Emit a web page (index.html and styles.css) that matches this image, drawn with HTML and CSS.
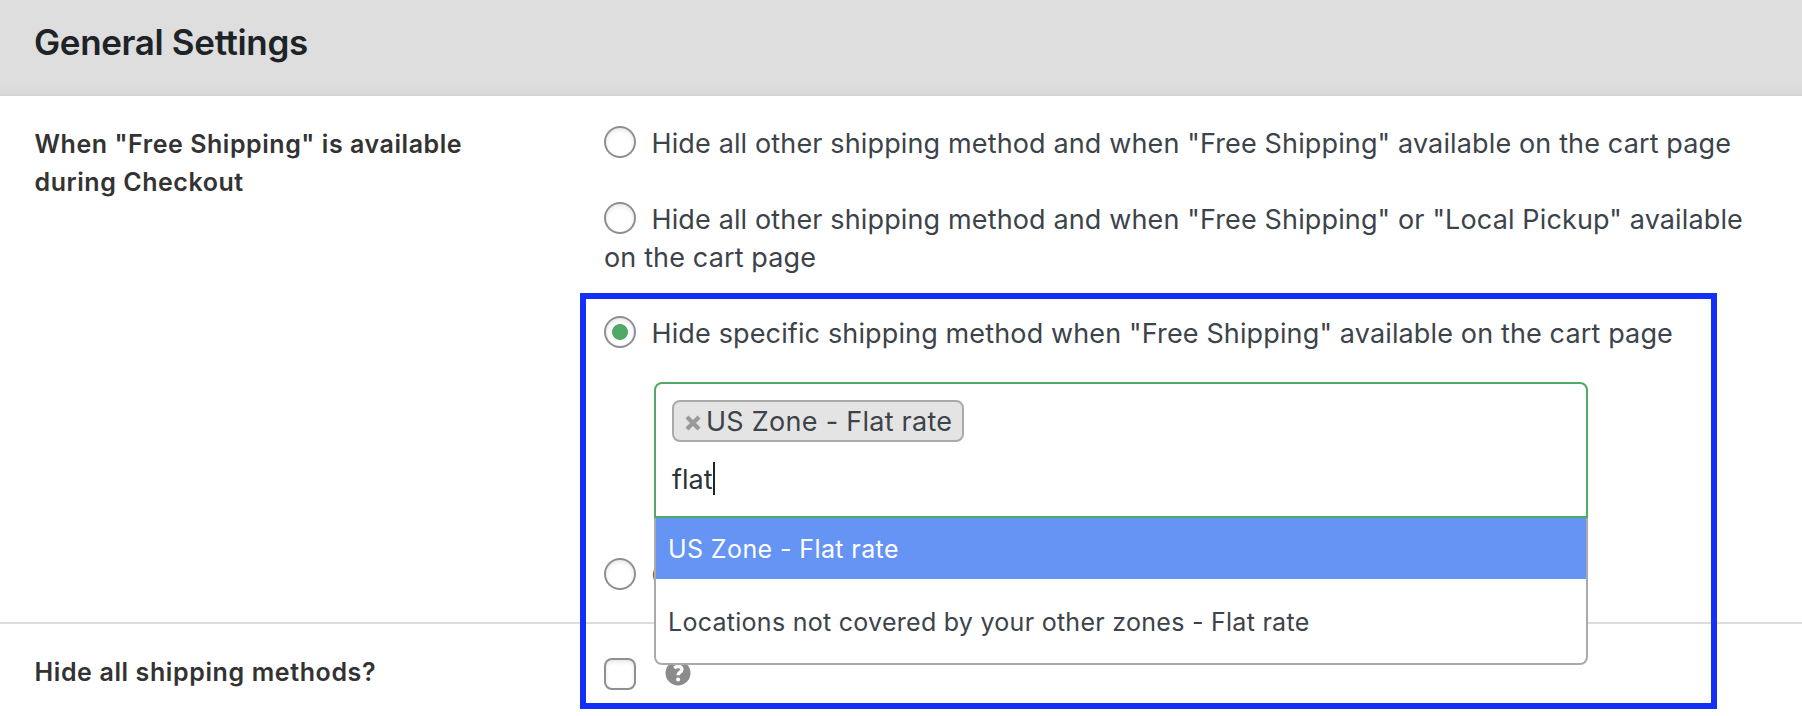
FILE: index.html
```
<!DOCTYPE html>
<html lang="en">
<head>
<meta charset="utf-8">
<title>General Settings</title>
<link rel="stylesheet" href="styles.css">
</head>
<body>
<main class="settings">
  <header class="settings-header"><h2 class="title">General Settings</h2></header>
  <section class="row row-methods">
    <div class="row-label">When "Free Shipping" is available<br>during Checkout</div>
    <div class="row-field">
      <label class="option"><span class="radio"></span>Hide all other shipping method and when "Free Shipping" available on the cart page</label>
      <label class="option"><span class="radio"></span>Hide all other shipping method and when "Free Shipping" or "Local Pickup" available<br>on the cart page</label>
      <label class="option"><span class="radio radio-checked"></span>Hide specific shipping method when "Free Shipping" available on the cart page</label>
      <div class="select">
        <div class="chip">
          <svg class="chip-remove" width="16" height="16" viewBox="0 0 16 16"><path d="M2 2L14 14M14 2L2 14" stroke="#999" stroke-width="4.2"/></svg><span class="chip-text">US Zone - Flat rate</span>
        </div>
        <div class="search"><span>flat</span><i class="caret"></i></div>
        <ul class="dropdown">
          <li class="choice choice-active">US Zone - Flat rate</li>
          <li class="choice choice-long">Locations not covered by your other zones - Flat rate</li>
        </ul>
      </div>
      <label class="option"><span class="radio"></span>C</label>
    </div>
  </section>
  <section class="row row-hide">
    <div class="row-label label-hide">Hide all shipping methods?</div>
    <div class="row-field field-hide">
      <span class="checkbox"></span>
      <svg class="help" width="26" height="26" viewBox="0 0 26 26"><circle cx="13" cy="13" r="12.5" fill="#8c8c8c"/><path d="M9.2 7.9C10.2 7 11.6 6.5 13.2 6.5C15.6 6.5 16.9 7.7 16.9 9.4C16.9 12.2 13.1 12.2 13.1 15.3" fill="none" stroke="#fff" stroke-width="3.4"/><circle cx="13.1" cy="19.4" r="2" fill="#fff"/></svg>
    </div>
  </section>
  <div class="highlight"></div>
</main>
</body>
</html>
```
FILE: styles.css
```
* { box-sizing: border-box; }
body { margin: 0; background: #fff; font-family: Inter, "Liberation Sans", sans-serif; color: #3c434a; }
.settings { position: relative; height: 716px; overflow: hidden; }
.settings-header { height: 96px; padding: 21px 34px 0; background: linear-gradient(#dedede 84px, #d9d9d9 93px, #d2d2d2 96px); }
.title { margin: 0; font-size: 35px; line-height: 42px; font-weight: 600; letter-spacing: -.35px; color: #1d2327; }
.row { display: flex; }
.row-methods { height: 528px; border-bottom: 2px solid #dcdcdc; }
.row-label { width: 604px; flex: none; padding: 29px 0 0 34.5px; font-size: 25px; line-height: 38px; font-weight: 600; letter-spacing: .55px; color: #333; }
.label-hide { letter-spacing: .61px; }
.row-field { flex: 1; padding-top: 29px; display: flex; flex-direction: column; }
.option { display: block; flex: none; margin-bottom: 38px; font-size: 27px; line-height: 38px; letter-spacing: .135px; white-space: nowrap; }
.radio, .checkbox { display: inline-block; width: 32px; height: 32px; border: 2px solid #8c8f94; background: #fff; box-shadow: inset 0 2px 4px rgba(0, 0, 0, .1); }
.radio { margin: 1px 15.5px 0 0; vertical-align: top; border-radius: 50%; }
.radio-checked { background: radial-gradient(circle, #52a966 7.6px, transparent 8.3px); }
.select { position: relative; flex: none; width: 934px; height: 136px; margin: -9px 0 39px 50px; padding: 16px; border: 2px solid #52a966; border-radius: 8px 8px 0 0; background: #fff; }
.chip { display: flex; align-items: center; width: 292px; height: 42px; padding-left: 11px; border: 2px solid #aaa; border-radius: 8px; background: #e4e4e4; }
.chip-remove { margin: 3px 5px 0 0; }
.chip-text { padding-top: 2px; font-size: 27px; line-height: 38px; letter-spacing: .27px; white-space: nowrap; }
.search { display: flex; align-items: center; margin-top: 19px; font-size: 27px; line-height: 38px; color: #2c3338; }
.caret { width: 2px; height: 33px; margin-top: -3px; background: #1d2327; }
.dropdown { position: absolute; z-index: 1; top: 134px; left: -2px; width: 934px; height: 147px; margin: 0; padding: 0; list-style: none; background: #fff; border: 2px solid #aaa; border-top: 0; border-radius: 0 0 8px 8px; }
.choice { padding: 12px 12px 11px; font-size: 25px; line-height: 38px; letter-spacing: .4px; white-space: nowrap; }
.choice-active { background: #6694f4; color: #fff; }
.choice-long { padding-top: 24px; letter-spacing: .275px; }
.row-hide { height: 92px; }
.field-hide { flex-direction: row; align-items: flex-start; gap: 28.5px; padding-top: 34px; }
.checkbox { border-radius: 8px; }
.help { margin-top: 2px; }
.highlight { position: absolute; z-index: 2; left: 580px; top: 293px; width: 1137px; height: 415.6px; border: 6px solid #1430f8; }
```
